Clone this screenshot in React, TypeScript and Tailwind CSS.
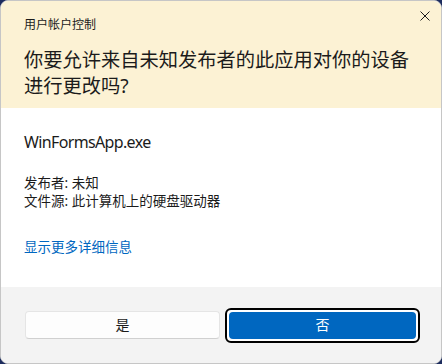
import React from "react"

const font = { fontFamily: '"Noto Sans", "Noto Sans CJK SC", sans-serif' }

function CloseIcon() {
  return (
    <svg width="10" height="10" viewBox="0 0 10 10" className="text-[#1b1b1b]">
      <path d="M0.5 0.5 L9.5 9.5 M9.5 0.5 L0.5 9.5" stroke="currentColor" strokeWidth="1" fill="none" />
    </svg>
  )
}

export default function App() {
  return (
    <div className="h-[364px] w-[442px] bg-[#1d2c5e]" style={font}>
      <div className="flex h-full flex-col overflow-hidden rounded-[8px] border border-[#c6c6c6] bg-white text-[#1b1b1b]">
        <header className="h-[107px] bg-[#fcf2d4] pl-[23px] pr-[11px] pt-[16px]">
          <div className="flex items-start justify-between">
            <span className="text-[12px] leading-[16px]">用户帐户控制</span>
            <span className="mt-[-6px]">
              <CloseIcon />
            </span>
          </div>
          <h1 className="mt-[14px] w-[396px] text-[19.25px] font-normal leading-[26px]">
            你要允许来自未知发布者的此应用对你的设备进行更改吗?
          </h1>
        </header>

        <section className="flex-1 px-[23px]">
          <p className="mt-[23px] text-[16px] leading-[22px] tracking-[-0.04em]">WinFormsApp.exe</p>
          <div className="mt-[21px] text-[13.5px] leading-[18px]">
            <p>发布者: 未知</p>
            <p>文件源: 此计算机上的硬盘驱动器</p>
          </div>
          <a href="#" className="mt-[27px] block text-[13.5px] leading-[20px] text-[#0067c0]">
            显示更多详细信息
          </a>
        </section>

        <footer className="flex h-[76px] items-center bg-[#f3f3f3] pl-[24px]">
          <button
            type="button"
            className="h-[28px] w-[195px] rounded-[4px] border border-[#e5e5e5] border-b-[#d0d0d0] bg-[#fdfdfd] text-[14px] leading-none text-[#1b1b1b]"
          >
            是
          </button>
          <div className="ml-[5px] h-[35px] w-[195px] rounded-[6px] border-2 border-black bg-white p-[2px]">
            <button
              type="button"
              className="h-full w-full rounded-[4px] bg-[#0067c0] text-[14px] leading-none text-white"
            >
              否
            </button>
          </div>
        </footer>
      </div>
    </div>
  )
}
